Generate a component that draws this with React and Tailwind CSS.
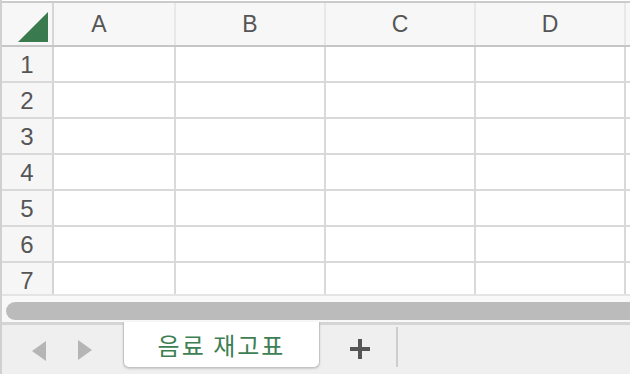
import React from 'react';

const cols = [
  { label: 'A', cls: 'w-[122px] pr-[30px]' },
  { label: 'B', cls: 'w-[150px]' },
  { label: 'C', cls: 'w-[150px]' },
  { label: 'D', cls: 'w-[150px]' },
];

const bodyCols = ['w-[122px]', 'w-[150px]', 'w-[150px]', 'w-[150px]'];

const rows = [1, 2, 3, 4, 5, 6, 7];

const font = { fontFamily: '"Liberation Sans", Arial, sans-serif' };

export default function App() {
  return (
    <div className="w-[630px] h-[374px] overflow-hidden bg-white border-l-2 border-[#d0d0d0] flex flex-col" style={font}>
      {/* grid */}
      <div className="h-[296px] shrink-0 overflow-hidden pt-[1px] border-b-2 border-[#e4e4e4]">
        {/* column headers */}
        <div className="flex h-[46px] border-y-2 border-t-[#cbcbcb] border-b-[#c6c6c6] bg-[#f7f7f7]">
          <div className="w-[52px] shrink-0 border-r-2 border-[#d6d6d6] relative">
            <svg className="absolute left-[16px] top-[9px]" width="30" height="30" viewBox="0 0 30 30">
              <polygon points="0,30 30,30 30,0" fill="#3a7a4f" />
            </svg>
          </div>
          {cols.map((c) => (
            <div
              key={c.label}
              className={`${c.cls} shrink-0 border-r-2 border-[#e8e8e8] flex items-center justify-center pt-[1px] text-[23px] text-[#555]`}
            >
              {c.label}
            </div>
          ))}
          <div className="flex-1" />
        </div>
        {/* rows */}
        {rows.map((r) => (
          <div key={r} className="flex h-[36px] border-b-2 border-[#d9d9d9]">
            <div className="w-[52px] shrink-0 bg-[#f6f6f6] border-r-2 border-[#d4d4d4] flex items-center justify-center pt-[2px] text-[24px] text-[#555]">
              {r}
            </div>
            {bodyCols.map((w, i) => (
              <div key={i} className={`${w} shrink-0 border-r-2 border-[#d9d9d9]`} />
            ))}
            <div className="flex-1" />
          </div>
        ))}
      </div>

      {/* horizontal scrollbar */}
      <div className="h-[26px] shrink-0 bg-[#f8f8f8] pt-[6px] pl-[4px] flex">
        <div className="h-[18px] flex-1 rounded-l-full bg-[#bbbbbb]" />
      </div>

      {/* sheet tabs */}
      <div className="flex-1 border-t-[3px] border-[#d5d5d5] bg-[#efefef] flex items-start">
        <svg className="ml-[30px] mt-[16px]" width="14" height="20" viewBox="0 0 14 20">
          <polygon points="14,0 14,20 0,10" fill="#b5b5b5" />
        </svg>
        <svg className="ml-[32px] mt-[15px]" width="14" height="20" viewBox="0 0 14 20">
          <polygon points="0,0 0,20 14,10" fill="#b5b5b5" />
        </svg>
        <div className="ml-[31px] -mt-[3px] w-[197px] h-[46px] bg-white border-x border-b border-[#c4c4c4] rounded-b-[6px] shadow-[0_1px_2px_rgba(0,0,0,0.15)] flex items-center justify-center">
          <span
            className="text-[24px] text-[#3d7f53] tracking-[2px]"
            style={{ fontFamily: '"Noto Sans CJK KR", "Liberation Sans", sans-serif' }}
          >
            음료 재고표
          </span>
        </div>
        <svg className="ml-[30px] mt-[14px]" width="20" height="20" viewBox="0 0 20 20">
          <path d="M10 0v20M0 10h20" stroke="#555" strokeWidth="4" />
        </svg>
        <div className="ml-[26px] mt-[2px] w-[2px] h-[40px] bg-[#cdcdcd]" />
      </div>
    </div>
  );
}
